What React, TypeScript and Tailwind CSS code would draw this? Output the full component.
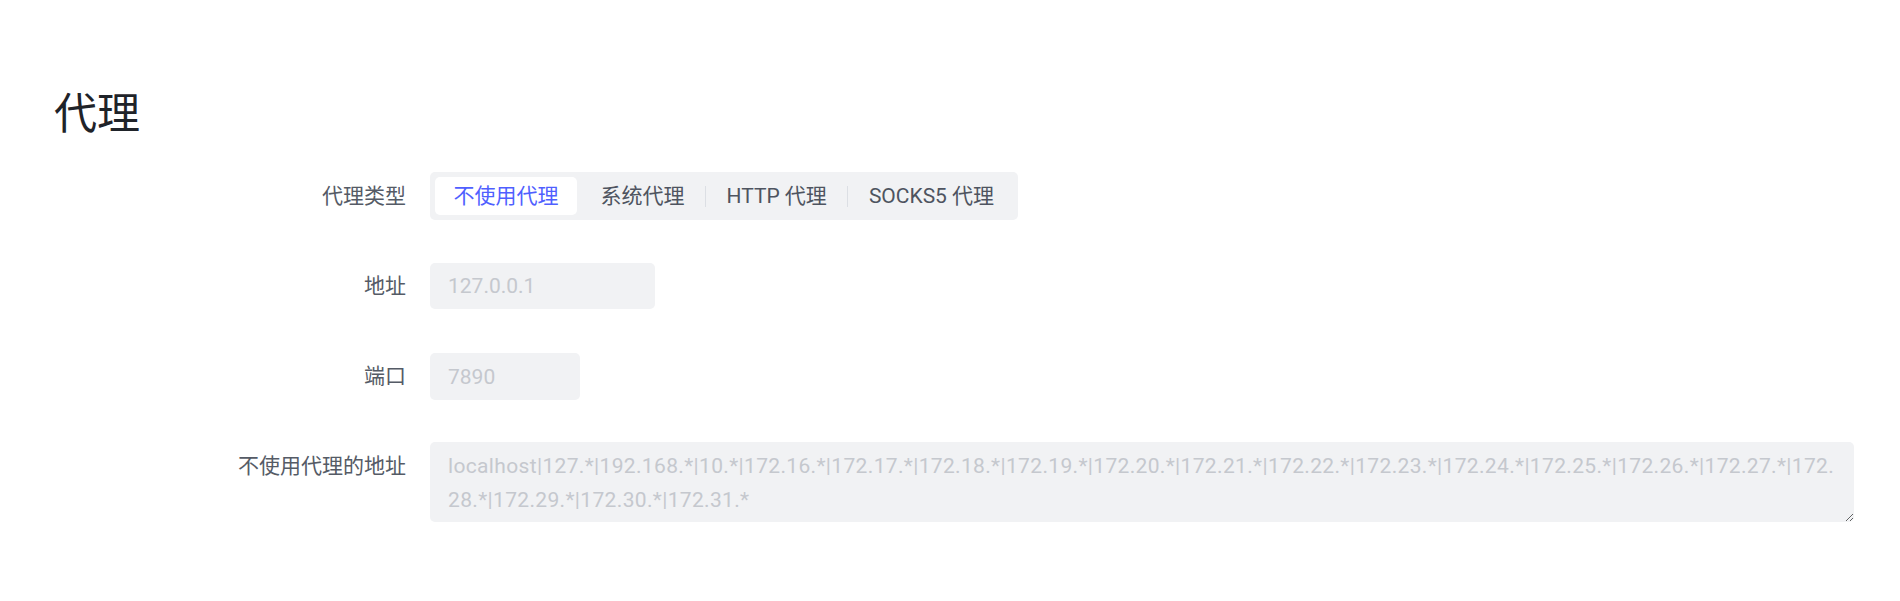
import React from "react";

const proxyTypes = ["不使用代理", "系统代理", "HTTP 代理", "SOCKS5 代理"];

const bypassLine1 =
    "localhost|127.*|192.168.*|10.*|172.16.*|172.17.*|172.18.*|172.19.*|172.20.*|172.21.*|172.22.*|172.23.*|172.24.*|172.25.*|172.26.*|172.27.*|172.";
const bypassLine2 = "28.*|172.29.*|172.30.*|172.31.*";

const FormRow = ({
    label,
    labelLeading,
    className,
    children,
}: {
    label: string;
    labelLeading: string;
    className?: string;
    children: React.ReactNode;
}) => (
    <div className={`flex items-start ${className ?? ""}`}>
        <label className={`w-[358px] shrink-0 text-right text-[21px] text-[#555b66] ${labelLeading}`}>{label}</label>
        <div className="ml-[24px] flex min-w-0 flex-1">{children}</div>
    </div>
);

const App = () => {
    const [active, setActive] = React.useState(0);

    return (
        <div
            className="min-h-screen bg-white pl-[48px] pr-[46px] pt-[93px]"
            style={{ fontFamily: 'Roboto, "Noto Sans CJK SC", sans-serif' }}
        >
            <h1 className="ml-[6px] text-[43px] font-normal leading-[43px] text-[#1f2329]">代理</h1>

            <div className="mt-[36px] flex flex-col">
                {/* Proxy type */}
                <FormRow label="代理类型" labelLeading="leading-[48px]">
                    <div className="flex h-[48px] items-center rounded-[5px] bg-[#f1f2f4] p-[5px]">
                        {proxyTypes.map((t, i) => (
                            <React.Fragment key={t}>
                                {i > 0 && (
                                    <span
                                        className={`mx-[2px] h-[21px] w-px ${
                                            i === active || i - 1 === active ? "bg-transparent" : "bg-[#dcdfe4]"
                                        }`}
                                    />
                                )}
                                <button
                                    type="button"
                                    onClick={() => setActive(i)}
                                    className={`h-[38px] rounded-[5px] px-[18.5px] text-[21px] leading-[38px] ${
                                        i === active ? "bg-white text-[#4f5fff]" : "text-[#4e5460]"
                                    }`}
                                >
                                    {t}
                                </button>
                            </React.Fragment>
                        ))}
                    </div>
                </FormRow>

                {/* Address */}
                <FormRow label="地址" labelLeading="leading-[46px]" className="mt-[43px]">
                    <input
                        type="text"
                        placeholder="127.0.0.1"
                        className="h-[46px] w-[225px] rounded-[5px] bg-[#f1f2f4] px-[18px] text-[21px] text-[#303133] outline-none placeholder:text-[#c5c8ce]"
                    />
                </FormRow>

                {/* Port */}
                <FormRow label="端口" labelLeading="leading-[47px]" className="mt-[44px]">
                    <input
                        type="text"
                        placeholder="7890"
                        className="h-[47px] w-[150px] rounded-[5px] bg-[#f1f2f4] px-[18px] text-[21px] text-[#303133] outline-none placeholder:text-[#c5c8ce]"
                    />
                </FormRow>

                {/* Bypass list */}
                <FormRow label="不使用代理的地址" labelLeading="leading-[48px]" className="mt-[42px]">
                    <textarea
                        wrap="off"
                        placeholder={`${bypassLine1}\n${bypassLine2}`}
                        className="h-[80px] w-full overflow-hidden rounded-[5px] bg-[#f1f2f4] pl-[18px] pr-[12px] pt-[7px] text-[21px] leading-[34px] tracking-[0.34px] text-[#303133] outline-none placeholder:text-[#c5c8ce]"
                    />
                </FormRow>
            </div>
        </div>
    );
};

export default App;
